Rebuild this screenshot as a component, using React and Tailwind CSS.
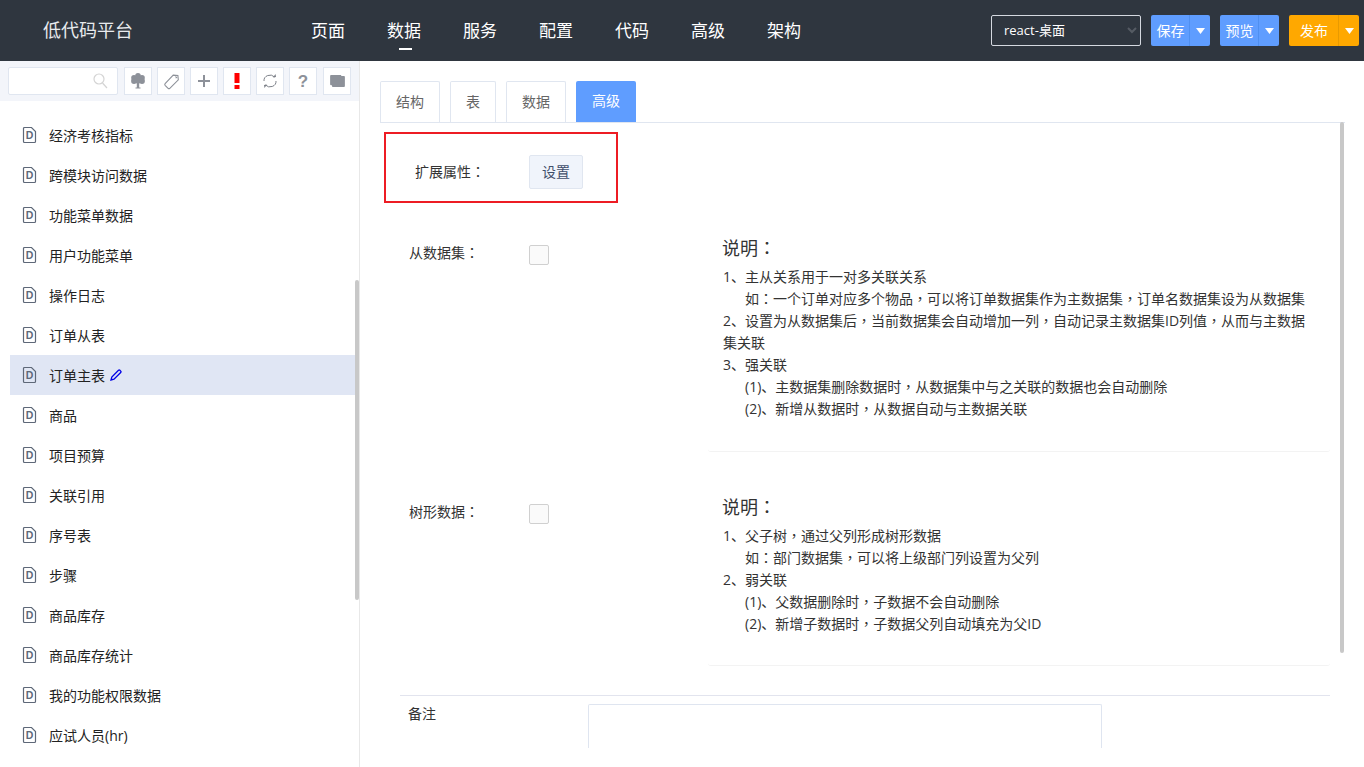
const items = ['经济考核指标','跨模块访问数据','功能菜单数据','用户功能菜单','操作日志','订单从表','订单主表','商品','项目预算','关联引用','序号表','步骤','商品库存','商品库存统计','我的功能权限数据','应试人员(hr)'];
const nav = ['页面','数据','服务','配置','代码','高级','架构'];

function P({ t }) {
  return t.split(/([：，])/).map((s, i) =>
    i % 2 ? <span key={i} className="font-['Noto_Sans_CJK_TC',sans-serif] leading-none">{s}</span> : s
  );
}

function DocIcon() {
  return (
    <svg width="15" height="18" viewBox="0 0 15 18" className="shrink-0">
      <path d="M1.500 2.500a1 1 0 0 1 1-1H9.500l4 4v10a1 1 0 0 1-1 1h-10a1 1 0 0 1-1-1z" fill="none" stroke="#5e6878" strokeWidth="1.200" />
      <text x="7.500" y="13" textAnchor="middle" fontSize="10.500" fontWeight="600" fontFamily="Liberation Sans" fill="#5e6878">D</text>
    </svg>
  );
}

function SplitButton({ label, main, color, line }) {
  return (
    <div className={`flex h-[31px] rounded-[2px] text-[14px] text-white ${color}`}>
      <div className={`flex items-center justify-center pl-px ${main}`}>{label}</div>
      <div className={`flex w-[21px] items-center justify-center border-l ${line}`}>
        <svg width="9" height="6" viewBox="0 0 9 6"><path d="M0 0h9L4.500 6z" fill="#fff" /></svg>
      </div>
    </div>
  );
}

function ToolBtn({ children }) {
  return <div className="flex h-[28px] w-[28px] items-center justify-center border border-[#e0e6f0] bg-white">{children}</div>;
}

function Explain({ lines, h }) {
  return (
    <div className={`ml-auto w-[622px] rounded-[3px] border-b border-[#f3f3f3] pl-[15px] pr-[15px] ${h}`}>
      <div className="mb-[3px] -ml-px h-[30px] text-[18px] leading-[30px] text-[#333]"><P t="说明：" /></div>
      {lines.map(([t, ind], i) => (
        <div key={i} className={`text-[14px] leading-[22px] text-[#333] ${ind ? 'pl-[22px]' : ''}`}><P t={t} /></div>
      ))}
    </div>
  );
}

export default function App() {
  return (
    <div className="flex h-[767px] w-[1364px] flex-col overflow-hidden bg-white font-['Open_Sans','Noto_Sans_CJK_SC',sans-serif]">
      <header className="flex h-[61px] shrink-0 items-center bg-[#2f363f]">
        <div className="ml-[43px] w-[268px] text-[18px] text-[#e8eaed]">低代码平台</div>
        <nav className="flex gap-[42px]">
          {nav.map((n, i) => (
            <div key={n} className="relative text-[17px] leading-[30px] text-white">
              {n}
              {i === 1 && <div className="absolute bottom-[-4px] left-[12px] h-[2px] w-[13px] bg-white" />}
            </div>
          ))}
        </nav>
        <div className="ml-auto mr-[5px] flex items-center gap-[10px]">
          <div className="flex h-[31px] w-[150px] items-center justify-between rounded-[2px] border border-[#d5d9e0] pl-[12px] pr-[3px] text-[13px] text-white">
            <span>react-桌面</span>
            <svg width="10" height="7" viewBox="0 0 10 7"><path d="M1 1l4 4 4-4" fill="none" stroke="#555b63" strokeWidth="2" /></svg>
          </div>
          <SplitButton label="保存" main="w-[38px]" color="bg-[#5f9dff]" line="border-[#4f8ff0]" />
          <SplitButton label="预览" main="w-[38px]" color="bg-[#5f9dff]" line="border-[#4f8ff0]" />
          <SplitButton label="发布" main="w-[49px]" color="bg-[#ffa800]" line="border-[#e89a00]" />
        </div>
      </header>
      <div className="flex min-h-0 flex-1">
        <aside className="relative w-[360px] shrink-0 overflow-hidden border-r border-[#e8e8e8]">
          <div className="flex h-[40px] items-center bg-[#f3f5fa] pl-[8px]">
            <div className="flex h-[28px] w-[110px] items-center justify-end rounded-[2px] border border-[#e0e6f0] bg-white pr-[9px]">
              <svg width="15" height="16" viewBox="0 0 15 16"><circle cx="6" cy="6" r="5" fill="none" stroke="#d4d4d4" strokeWidth="1.200" /><path d="M9.500 10l4.500 5" stroke="#d4d4d4" strokeWidth="1.200" /></svg>
            </div>
            <div className="ml-[6px] flex gap-[5px]">
              <ToolBtn>
                <svg width="14" height="16" viewBox="0 0 14 16"><path d="M5.800 9h2.400v5.500H5.800zM4.500 14.500h5v1h-5z" fill="#8d9199" /><circle cx="7" cy="2.800" r="2.800" fill="#8d9199" /><circle cx="3" cy="4.800" r="2.800" fill="#8d9199" /><circle cx="11" cy="4.800" r="2.800" fill="#8d9199" /><circle cx="3" cy="8" r="2.900" fill="#8d9199" /><circle cx="11" cy="8" r="2.900" fill="#8d9199" /><circle cx="7" cy="6.500" r="4" fill="#8d9199" /></svg>
              </ToolBtn>
              <ToolBtn>
                <svg width="17" height="17" viewBox="0 0 20 20"><path d="M12 2.500l5.500.5.500 5L8 18a1.500 1.500 0 0 1-2 0l-3.500-3.500a1.500 1.500 0 0 1 0-2z" fill="none" stroke="#8d9199" strokeWidth="1.300" /><path d="M14.500 3l2.500 2.500-2 1z" fill="#8d9199" /></svg>
              </ToolBtn>
              <ToolBtn>
                <svg width="14" height="14" viewBox="0 0 14 14"><path d="M7 1v12M1 7h12" stroke="#8d9199" strokeWidth="2" /></svg>
              </ToolBtn>
              <ToolBtn>
                <svg width="6" height="16" viewBox="0 0 6 16"><path d="M.500 0h5v10h-5zM.500 12h5v4h-5z" fill="#f00" /></svg>
              </ToolBtn>
              <ToolBtn>
                <svg width="18" height="16" viewBox="0 0 18 16"><path d="M3 8a6 5.500 0 0 1 10.500-4M15 8a6 5.500 0 0 1-10.500 4" fill="none" stroke="#7d8189" strokeWidth="1" /><path d="M12 4.500l3-.5-.5-3zM6 11.500l-3 .5.5 3z" fill="#7d8189" /></svg>
              </ToolBtn>
              <ToolBtn>
                <span className="font-['Liberation_Sans'] text-[17px] font-bold leading-none text-[#8d9199]">?</span>
              </ToolBtn>
              <div className="ml-px">
                <ToolBtn>
                  <svg width="15" height="12" viewBox="0 0 16 13"><path d="M1 0h11v1h3a1 1 0 0 1 1 1v10a1 1 0 0 1-1 1H3a1 1 0 0 1-1-1v-1H1a1 1 0 0 1-1-1V1a1 1 0 0 1 1-1z" fill="#8d9199" /></svg>
                </ToolBtn>
              </div>
            </div>
          </div>
          <div className="pl-[10px] pt-[14px]">
            {items.map((t, i) => (
              <div key={t} className={`flex h-[40px] w-[345px] items-center pl-[12px] text-[#222] ${i === 6 ? 'bg-[#e0e6f4]' : ''}`}>
                <DocIcon />
                <span className="ml-[12px] pt-px text-[14px]">{t}</span>
                {i === 6 && (
                  <svg width="12" height="12" viewBox="0 0 12 12" className="ml-[5px]"><path d="M1 11l.8-3L8.500 1.300a1 1 0 0 1 1.400 0l.8.8a1 1 0 0 1 0 1.400L4 10.200z" fill="none" stroke="#0000e6" strokeWidth="1.300" /></svg>
                )}
              </div>
            ))}
          </div>
          <div className="absolute left-[355px] top-[219px] h-[320px] w-[4px] rounded-[2px] bg-[#c8c8c8]" />
        </aside>
        <main className="relative h-[687px] min-w-0 flex-1 overflow-hidden pl-[20px] pt-[20px]">
          <div className="mr-[19px] flex h-[42px] gap-[10px] border-b border-[#e0e6f0] text-[14px] text-[#666]">
            <div className="flex h-[41px] w-[60px] items-center justify-center rounded-t-[2px] border border-b-0 border-[#e0e6f0] pb-[2px]">结构</div>
            <div className="flex h-[41px] w-[46px] items-center justify-center rounded-t-[2px] border border-b-0 border-[#e0e6f0] pb-[2px]">表</div>
            <div className="flex h-[41px] w-[60px] items-center justify-center rounded-t-[2px] border border-b-0 border-[#e0e6f0] pb-[2px]">数据</div>
            <div className="flex h-[41px] w-[60px] items-center justify-center rounded-t-[2px] bg-[#5f9dff] pb-[2px] text-white">高级</div>
          </div>
          <div className="ml-[4px] mt-[9px] flex h-[71px] w-[234px] items-center border-2 border-[#ed1c24] pl-[29px] pt-[8px]">
            <span className="w-[114px] text-[14px] text-[#333]"><P t="扩展属性：" /></span>
            <div className="flex h-[34px] w-[54px] items-center justify-center rounded-[2px] border border-[#e0e6f0] bg-[#f0f4fb] text-[14px] text-[#3f4f6b]">设置</div>
          </div>
          <div className="mt-[22px] flex h-[227px] w-[950px]">
            <div className="ml-[29px] w-[120px] pt-[18px] text-[14px] leading-[20px] text-[#333]"><P t="从数据集：" /></div>
            <div className="mt-[20px] h-[20px] w-[20px] rounded-[2px] border border-[#d0d0d0] bg-[#fafafa]" />
            <Explain
              h="h-[227px] pt-[8px]"
              lines={[
                ['1、主从关系用于一对多关联关系'],
                ['如：一个订单对应多个物品，可以将订单数据集作为主数据集，订单名数据集设为从数据集', 1],
                ['2、设置为从数据集后，当前数据集会自动增加一列，自动记录主数据集ID列值，从而与主数据'],
                ['集关联'],
                ['3、强关联'],
                ['(1)、主数据集删除数据时，从数据集中与之关联的数据也会自动删除', 1],
                ['(2)、新增从数据时，从数据自动与主数据关联', 1],
              ]}
            />
          </div>
          <div className="flex h-[214px] w-[950px]">
            <div className="ml-[29px] w-[120px] pt-[50px] text-[14px] leading-[20px] text-[#333]"><P t="树形数据：" /></div>
            <div className="mt-[52px] h-[20px] w-[20px] rounded-[2px] border border-[#d0d0d0] bg-[#fafafa]" />
            <Explain
              h="h-[214px] pt-[40px]"
              lines={[
                ['1、父子树，通过父列形成树形数据'],
                ['如：部门数据集，可以将上级部门列设置为父列', 1],
                ['2、弱关联'],
                ['(1)、父数据删除时，子数据不会自动删除', 1],
                ['(2)、新增子数据时，子数据父列自动填充为父ID', 1],
              ]}
            />
          </div>
          <div className="ml-[20px] mt-[29px] flex w-[930px] border-t border-[#e2e4ee] pt-[8px]">
            <div className="w-[188px] pl-[8px] text-[14px] leading-[20px] text-[#333]">备注</div>
            <div className="h-[44px] w-[514px] rounded-t-[2px] border border-b-0 border-[#dfe5f0]" />
          </div>
          <div className="absolute left-[980px] top-[61px] h-[531px] w-[4px] rounded-[2px] bg-[#c8c8c8]" />
        </main>
      </div>
    </div>
  );
}
